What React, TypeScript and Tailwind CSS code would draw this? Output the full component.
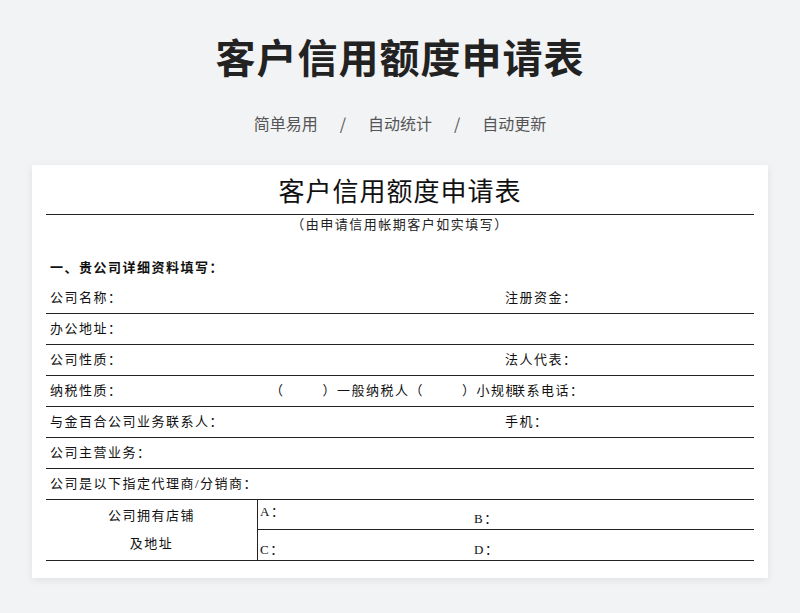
const font = { fontFamily: '"Liberation Serif", "Noto Sans CJK SC", serif' };

const Row = ({ left, right }: { left: string; right?: string }) => (
  <div className="flex h-[31px] items-center border-b border-[#222] text-[13px] tracking-[1.5px] text-[#111]">
    <span className="w-[224px] pl-[4px]">{left}</span>
    <span className="flex-1" />
    {right !== undefined && <span className="w-[249px]">{right}</span>}
  </div>
);

export default function App() {
  return (
    <div className="min-h-[613px] bg-[#f2f3f5] pt-[30px]" style={{ fontFamily: '"Noto Sans CJK SC", sans-serif' }}>
      <h1 className="text-center text-[40px] font-bold leading-[52px] tracking-[1px] text-[#222]">客户信用额度申请表</h1>
      <div className="mt-[29px] flex justify-center gap-[22px] text-[16px] text-[#555]">
        <span>简单易用</span>
        <span>/</span>
        <span>自动统计</span>
        <span>/</span>
        <span>自动更新</span>
      </div>
      <div className="mx-[32px] mt-[30px] h-[413px] bg-white px-[14px] pt-[10px] shadow-[0_2px_8px_rgba(0,0,0,0.08)]" style={font}>
        <div className="border-b border-[#222] pb-[3px] text-center text-[26px] leading-[36px] tracking-[1px] text-[#111]">客户信用额度申请表</div>
        <div className="mt-[1px] text-center text-[13px] leading-[18px] tracking-[1.5px] text-[#222]">（由申请信用帐期客户如实填写）</div>
        <div className="mt-[24px] pl-[4px] text-[13px] font-bold tracking-[1.5px] text-[#111]">一、贵公司详细资料填写：</div>
        <div className="mt-[5px]">
          <Row left="公司名称：" right="注册资金：" />
          <Row left="办公地址：" />
          <Row left="公司性质：" right="法人代表：" />
          <div className="flex h-[31px] items-center border-b border-[#222] text-[13px] tracking-[1.5px] text-[#111]">
            <span className="w-[224px] pl-[4px]">纳税性质：</span>
            <span className="whitespace-pre">（        ）一般纳税人（        ）小规模</span>
            <span className="-ml-[8px] bg-white">联系电话：</span>
          </div>
          <Row left="与金百合公司业务联系人：" right="手机：" />
          <Row left="公司主营业务：" />
          <div className="flex h-[31px] items-center border-b border-[#222] pl-[4px] text-[13px] tracking-[1.5px] text-[#111]">公司是以下指定代理商/分销商：</div>
          <div className="flex h-[61px] border-b border-[#222] text-[13px] tracking-[1.5px] text-[#111]">
            <div className="flex w-[212px] flex-col items-center justify-around border-r border-[#222] py-[2px]">
              <span>公司拥有店铺</span>
              <span>及地址</span>
            </div>
            <div className="flex flex-1 flex-col">
              <div className="flex h-[30px] border-b border-[#222]">
                <span className="w-[216px] pl-[2px] pt-[2px]">A：</span>
                <span className="self-end">B：</span>
              </div>
              <div className="flex flex-1 items-end">
                <span className="w-[216px] pl-[2px]">C：</span>
                <span>D：</span>
              </div>
            </div>
          </div>
        </div>
      </div>
    </div>
  );
}
